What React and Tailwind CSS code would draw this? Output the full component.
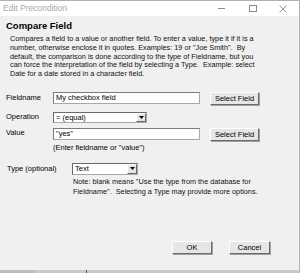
import React from 'react';

const font = { fontFamily: '"Liberation Sans", Arial, sans-serif' };

// 3D push button like classic Windows dialogs
function Btn({ children, className = '' }) {
  return (
    <div className={`flex items-center justify-center bg-[#e6e6e6] border border-t-white border-l-white border-r-[#6b6b6b] border-b-[#6b6b6b] shadow-[1px_1px_0_#a0a0a0] text-[7.5px] text-black ${className}`}>
      {children}
    </div>
  );
}

function TextBox({ value, className = '' }) {
  return (
    <div className={`flex items-center bg-white border border-[#a8a8a8] border-t-[#7a7a7a] border-l-[#7a7a7a] pl-[2px] text-[7.5px] text-black ${className}`}>
      {value}
    </div>
  );
}

function Combo({ value, className = '' }) {
  return (
    <div className={`flex items-center bg-white border border-[#a8a8a8] border-t-[#6a6a6a] border-l-[#6a6a6a] text-[7.5px] text-black ${className}`}>
      <span className="flex-1 pl-[2px]">{value}</span>
      <div className="w-[10px] h-full flex items-center justify-center bg-[#e6e6e6] border-l border-t border-t-white border-l-white border-r border-b border-r-[#6b6b6b] border-b-[#6b6b6b]">
        <svg width="5" height="3" viewBox="0 0 5 3"><path d="M0 0h5L2.5 3z" fill="#000" /></svg>
      </div>
    </div>
  );
}

export default function App() {
  return (
    <div style={font} className="w-[300px] h-[273px] bg-[#f0f0f0] flex flex-col overflow-hidden border-r border-[#b4b4b4]">
      {/* title bar */}
      <div className="h-[16px] bg-white border-t border-[#b0b0b0] flex items-center">
        <span className="pl-[3px] text-[8.5px] text-[#a8a8a8]">Edit Precondition</span>
        <div className="ml-auto flex items-center">
          <div className="w-[7px] h-px bg-[#8a8a8a] mr-[24px]" />
          <div className="w-[8px] h-[7px] border border-[#8a8a8a] mr-[22px]" />
          <svg width="8" height="8" viewBox="0 0 8 8" className="mr-[12px]">
            <path d="M0.5 0.5l7 7M7.5 0.5l-7 7" stroke="#8a8a8a" strokeWidth="0.9" />
          </svg>
        </div>
      </div>

      <div className="text-[9.5px] font-bold text-black pl-[6px] mt-[4px] leading-[12px]">Compare Field</div>
      <div className="pl-[10px] w-[262px] mt-[3px] text-[7.3px] leading-[8.75px] text-[#111]">
        Compares a field to a value or another field. To enter a value, type it if it is a number, otherwise enclose it in quotes. Examples: 19 or "Joe Smith".&nbsp; By default, the comparison is done according to the type of Fieldname, but you can force the interpretation of the field by selecting a Type.&nbsp; Example: select Date for a date stored in a character field.
      </div>

      {/* Fieldname */}
      <div className="flex items-start mt-[13px]">
        <span className="w-[53px] pl-[6px] text-[7.5px] leading-[10px] pt-px">Fieldname</span>
        <TextBox value="My checkbox field" className="w-[147px] h-[12px]" />
        <Btn className="ml-[10px] w-[49px] h-[13px]">Select Field</Btn>
      </div>

      {/* Operation */}
      <div className="flex items-start mt-[7px]">
        <span className="w-[53px] pl-[6px] text-[7.5px] leading-[10px]">Operation</span>
        <Combo value="= (equal)" className="w-[94px] h-[11px]" />
      </div>

      {/* Value */}
      <div className="flex items-start mt-[5px]">
        <span className="w-[53px] pl-[6px] text-[7.5px] leading-[10px]">Value</span>
        <TextBox value={'"yes"'} className="w-[147px] h-[12px]" />
        <Btn className="ml-[10px] w-[49px] h-[13px]">Select Field</Btn>
      </div>
      <div className="pl-[53px] text-[7.5px] leading-[10px] mt-[2px]">(Enter fieldname or "value")</div>

      {/* Type */}
      <div className="flex items-start mt-[10px]">
        <span className="w-[72px] pl-[7px] text-[7.5px] leading-[10px] pt-[1px]">Type (optional)</span>
        <Combo value="Text" className="w-[66px] h-[12px]" />
      </div>
      <div className="pl-[73px] w-[275px] mt-[2px] text-[7.3px] leading-[10px] text-[#111]">
        Note: blank means "Use the type from the database for Fieldname".&nbsp; Selecting a Type may provide more options.
      </div>

      {/* dialog buttons */}
      <div className="flex mt-auto mb-[16px]">
        <Btn className="ml-[172px] w-[40px] h-[13px]">OK</Btn>
        <Btn className="ml-[17px] w-[41px] h-[13px]">Cancel</Btn>
      </div>
      <div className="h-[3px] bg-[#c9c9c9] flex">
        <div className="w-[35px] bg-[#bdbdbd]" />
        <div className="ml-[51px] w-px bg-[#555]" />
      </div>
    </div>
  );
}
